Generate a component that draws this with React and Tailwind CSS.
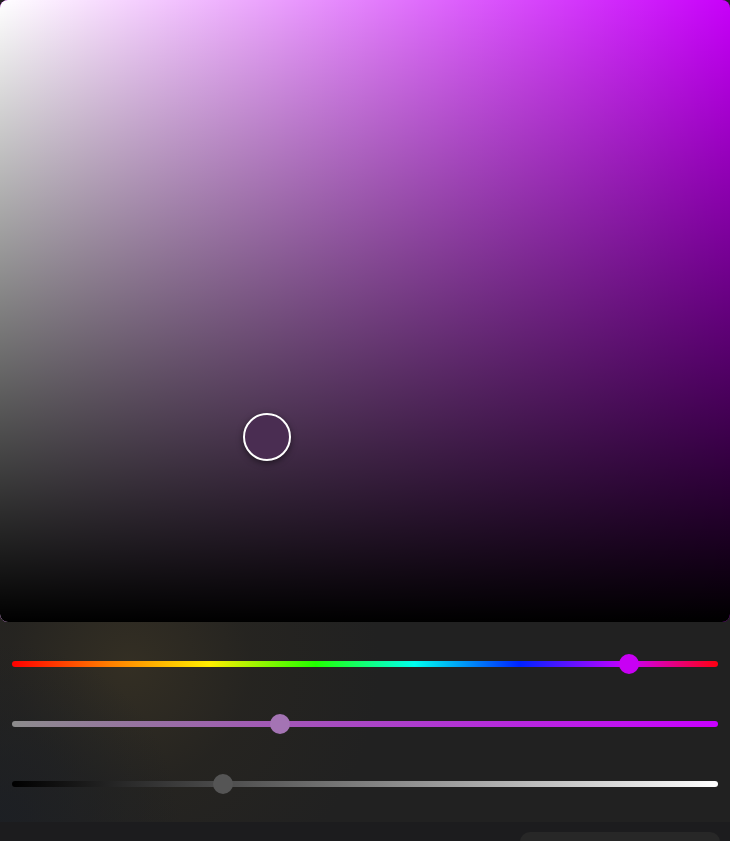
import React from "react";

function Track({ gradient, thumbLeft, thumbColor }) {
  return (
    <div className="px-[12px]">
      <div className={`relative h-[6px] rounded-full ${gradient}`}>
        <div
          className={`absolute top-1/2 w-[20px] h-[20px] -translate-x-1/2 -translate-y-1/2 rounded-full ${thumbColor}`}
          style={{ left: thumbLeft }}
        />
      </div>
    </div>
  );
}

export default function App() {
  return (
    <div className="relative w-[730px] h-[841px] overflow-hidden bg-[#212121] font-['Inter',sans-serif]">
      <div className="absolute inset-0 pointer-events-none bg-[radial-gradient(circle_at_130px_665px,rgba(56,50,36,0.8)_0px,rgba(42,39,32,0.5)_120px,rgba(33,33,33,0)_250px)]" />
      <div className="absolute left-0 top-[622px] w-[260px] h-[220px] pointer-events-none bg-[radial-gradient(circle_at_0px_200px,rgba(28,31,36,0.9)_0px,rgba(28,31,36,0)_180px)]" />
      <div className="relative flex flex-col">
        <div className="relative h-[622px] w-full rounded-lg overflow-hidden bg-[#c800fa]">
          <div className="absolute inset-0 bg-gradient-to-r from-white to-transparent" />
          <div className="absolute inset-0 bg-gradient-to-b from-transparent to-black" />
          <div className="absolute left-[243px] top-[413px] w-[48px] h-[48px] rounded-full border-2 border-white bg-[#4a2d52] shadow-[0_2px_6px_rgba(0,0,0,0.5)]" />
        </div>
        <div className="flex flex-col pt-[39px] pb-[35px] gap-[54px]">
          <Track
            gradient="bg-[linear-gradient(to_right,#ff0000_0%,#ff8000_14%,#ffee00_28%,#22ff00_43%,#00ffee_57%,#0022ff_72%,#c800ff_87%,#ff0010_100%)]"
            thumbLeft="617px"
            thumbColor="bg-[#c800f4]"
          />
          <Track
            gradient="bg-[linear-gradient(to_right,#8c8c8c,#c800ff)]"
            thumbLeft="268px"
            thumbColor="bg-[#a474b4]"
          />
          <Track
            gradient="bg-[linear-gradient(to_right,#000000,#ffffff)]"
            thumbLeft="211px"
            thumbColor="bg-[#555555]"
          />
        </div>
        <div className="flex justify-end h-[19px] pt-[10px] pr-[10px] bg-[#1c1c1e]">
          <div className="w-[200px] h-[30px] rounded-[10px] bg-[#272727]" />
        </div>
      </div>
    </div>
  );
}
